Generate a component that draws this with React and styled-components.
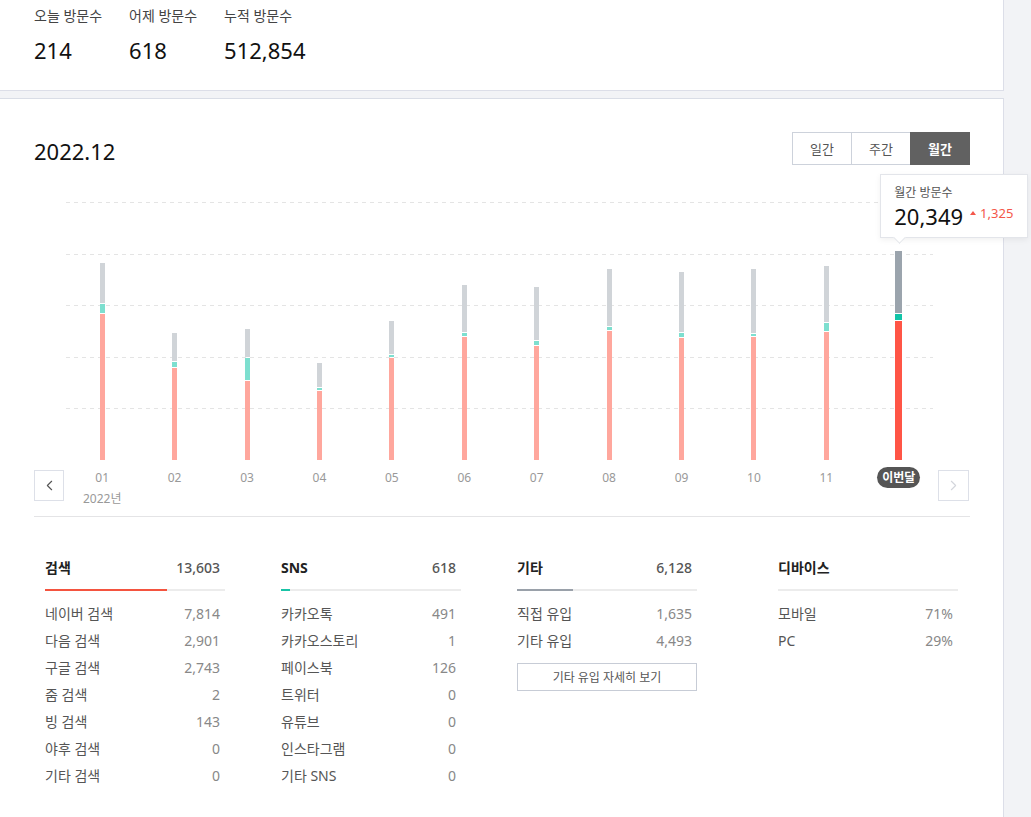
import React from 'react';
import styled, { createGlobalStyle } from 'styled-components';
import { ChevronLeft, ChevronRight } from 'lucide-react';

const FONT = `"Noto Sans", "Noto Sans CJK KR", sans-serif`;

const Global = createGlobalStyle`
  html, body { margin: 0; padding: 0; background: #f2f3f6; }
  body { font-family: ${FONT}; color: #222; }
  * { box-sizing: border-box; }
`;

const Page = styled.div`
  width: 1004px;
  display: flex;
  flex-direction: column;
  gap: 7px;
`;

const Panel = styled.section`
  background: #fff;
  border-right: 1px solid #dcdee8;
  border-bottom: 1px solid #dcdee8;
  border-top: ${(p) => (p.$top ? '1px solid #d9dde6' : 'none')};
`;

const SummaryPanel = styled(Panel)`
  height: 91px;
  padding: 6px 34px 0;
  display: flex;
  gap: 27px;
`;

const SummaryItem = styled.div`
  display: flex;
  flex-direction: column;
`;

const SummaryLabel = styled.div`
  font-size: 14px;
  line-height: 20px;
  color: #444;
`;

const SummaryValue = styled.div`
  margin-top: 9px;
  font-size: 22px;
  line-height: 30px;
  color: #111;
`;

const ChartPanel = styled(Panel)`
  padding: 33px 33px 40px 34px;
`;

const Header = styled.div`
  display: flex;
  justify-content: space-between;
  align-items: flex-start;
  height: 33px;
`;

const Title = styled.h2`
  margin: 3px 0 0;
  font-size: 22px;
  line-height: 33px;
  font-weight: 400;
  color: #111;
`;

const Segments = styled.div`
  display: flex;
`;

const SegButton = styled.button`
  width: 60px;
  height: 33px;
  margin-left: -1px;
  border: 1px solid ${(p) => (p.$active ? '#616161' : '#cdd2db')};
  background: ${(p) => (p.$active ? '#616161' : '#fff')};
  color: ${(p) => (p.$active ? '#fff' : '#555')};
  font-family: ${FONT};
  font-size: 13px;
  font-weight: ${(p) => (p.$active ? 700 : 400)};
  padding: 0;
  cursor: pointer;
`;

const ChartBlock = styled.div`
  height: 352px;
  display: flex;
  align-items: flex-start;
  border-bottom: 1px solid #e4e4e6;
`;

const NavButton = styled.button`
  width: ${(p) => p.$w}px;
  height: 31px;
  margin-top: 305px;
  margin-left: ${(p) => p.$ml}px;
  border: 1px solid #dde0e8;
  background: #fff;
  display: flex;
  align-items: center;
  justify-content: center;
  padding: 0;
  color: ${(p) => (p.$disabled ? '#d4d6dc' : '#555')};
`;

const Plot = styled.div`
  position: relative;
  width: 869px;
  margin-left: 2px;
  height: 351px;
  display: grid;
  grid-template-columns: repeat(12, 1fr);
`;

const GridLines = styled.svg`
  position: absolute;
  left: 0;
  top: 0;
  width: 867px;
  height: 295px;
`;

const Column = styled.div`
  display: flex;
  flex-direction: column;
  align-items: center;
`;

const BarArea = styled.div`
  height: 295px;
  width: 100%;
  display: flex;
  align-items: flex-end;
  justify-content: center;
  position: relative;
`;

const Stack = styled.div`
  position: relative;
  width: ${(p) => (p.$current ? 7 : 5)}px;
  display: flex;
  flex-direction: column;
  gap: 1px;
`;

const Seg = styled.div`
  background: ${(p) => p.$color};
`;

const MonthLabel = styled.div`
  margin-top: 10px;
  font-size: 12px;
  line-height: 16px;
  color: #999;
`;

const YearLabel = styled.div`
  margin-top: 5px;
  font-size: 12px;
  line-height: 16px;
  color: #999;
`;

const CurrentPill = styled.div`
  margin-top: 7px;
  height: 21px;
  padding: 0 5px;
  border-radius: 11px;
  background: #555;
  color: #fff;
  font-size: 12px;
  font-weight: 700;
  line-height: 21px;
`;

const Tooltip = styled.div`
  position: absolute;
  left: -15px;
  bottom: calc(100% + 13px);
  background: #fff;
  border: 1px solid #e3e5ea;
  box-shadow: 0 2px 6px rgba(0, 0, 0, 0.06);
  padding: 10px 14px 7px 13px;
  white-space: nowrap;
  z-index: 2;
`;

const TipArrow = styled.div`
  position: absolute;
  left: 14px;
  bottom: -5px;
  width: 9px;
  height: 9px;
  background: #fff;
  border-right: 1px solid #e3e5ea;
  border-bottom: 1px solid #e3e5ea;
  transform: rotate(45deg);
`;

const TipLabel = styled.div`
  font-size: 12px;
  line-height: 16px;
  color: #555;
`;

const TipRow = styled.div`
  display: flex;
  align-items: center;
  margin-top: 1px;
`;

const TipValue = styled.span`
  font-size: 22px;
  line-height: 28px;
  color: #111;
`;

const Delta = styled.span`
  display: flex;
  align-items: center;
  gap: 4px;
  margin-left: 7px;
  margin-bottom: 7px;
  font-size: 13px;
  line-height: 16px;
  color: #f4574a;
`;

const UpTri = styled.span`
  width: 0;
  height: 0;
  border-left: 3px solid transparent;
  border-right: 3px solid transparent;
  border-bottom: 4px solid #f4574a;
`;

const Stats = styled.div`
  display: flex;
  padding: 41px 0 0 11px;
`;

const StatCol = styled.div`
  width: 180px;
  margin-left: ${(p) => p.$ml}px;
`;

const StatHead = styled.div`
  display: flex;
  justify-content: space-between;
  padding: 0 5px 11px 0;
  line-height: 20px;
`;

const HeadLabel = styled.span`
  font-size: 14px;
  font-weight: 700;
  color: #222;
`;

const HeadValue = styled.span`
  font-size: 14px;
  font-weight: 500;
  color: #555;
`;

const Track = styled.div`
  height: 2px;
  background: #ececec;
  margin-bottom: 9px;
`;

const Fill = styled.div`
  height: 2px;
  background: ${(p) => p.$color};
`;

const Row = styled.div`
  display: flex;
  justify-content: space-between;
  padding-right: 5px;
  line-height: 27px;
`;

const RowLabel = styled.span`
  font-size: 14px;
  color: #555;
`;

const RowValue = styled.span`
  font-size: 14px;
  color: #888;
`;

const DetailButton = styled.button`
  margin-top: 9px;
  width: 180px;
  height: 28px;
  border: 1px solid #c7ccd6;
  background: #fff;
  color: #555;
  font-family: ${FONT};
  font-size: 12px;
  padding: 0;
`;

const bars = [
  [40, 9, 146],
  [28, 5, 92],
  [28, 22, 79],
  [24, 2, 69],
  [33, 2, 102],
  [47, 3, 123],
  [53, 4, 114],
  [57, 3, 129],
  [60, 4, 122],
  [64, 2, 123],
  [56, 8, 128],
  [62, 6, 139],
];

const months = ['01', '02', '03', '04', '05', '06', '07', '08', '09', '10', '11'];

const stats = [
  {
    title: '검색',
    total: '13,603',
    fill: 68,
    color: '#f4543f',
    rows: [
      ['네이버 검색', '7,814'],
      ['다음 검색', '2,901'],
      ['구글 검색', '2,743'],
      ['줌 검색', '2'],
      ['빙 검색', '143'],
      ['야후 검색', '0'],
      ['기타 검색', '0'],
    ],
  },
  {
    title: 'SNS',
    total: '618',
    fill: 5,
    color: '#19c3a6',
    rows: [
      ['카카오톡', '491'],
      ['카카오스토리', '1'],
      ['페이스북', '126'],
      ['트위터', '0'],
      ['유튜브', '0'],
      ['인스타그램', '0'],
      ['기타 SNS', '0'],
    ],
  },
  {
    title: '기타',
    total: '6,128',
    fill: 31,
    color: '#9aa1aa',
    rows: [
      ['직접 유입', '1,635'],
      ['기타 유입', '4,493'],
    ],
    button: '기타 유입 자세히 보기',
  },
  {
    title: '디바이스',
    total: '',
    fill: 0,
    color: '#ececec',
    rows: [
      ['모바일', '71%'],
      ['PC', '29%'],
    ],
  },
];

export default function App() {
  return (
    <>
      <Global />
      <Page>
        <SummaryPanel>
          {[
            ['오늘 방문수', '214'],
            ['어제 방문수', '618'],
            ['누적 방문수', '512,854'],
          ].map(([l, v]) => (
            <SummaryItem key={l}>
              <SummaryLabel>{l}</SummaryLabel>
              <SummaryValue>{v}</SummaryValue>
            </SummaryItem>
          ))}
        </SummaryPanel>

        <ChartPanel $top>
          <Header>
            <Title>2022.12</Title>
            <Segments>
              <SegButton>일간</SegButton>
              <SegButton>주간</SegButton>
              <SegButton $active>월간</SegButton>
            </Segments>
          </Header>

          <ChartBlock>
            <NavButton $w={30} $ml={0}>
              <ChevronLeft size={17} strokeWidth={1.6} />
            </NavButton>
            <Plot>
              <GridLines>
                {[37.5, 89.5, 140.5, 192.5, 243.5].map((y) => (
                  <line key={y} x1="0" x2="867" y1={y} y2={y} stroke="#e4e4e4" strokeWidth="1" strokeDasharray="4 4" />
                ))}
              </GridLines>
              {bars.map(([g, t, r], i) => {
                const current = i === 11;
                return (
                  <Column key={i}>
                    <BarArea>
                      <Stack $current={current}>
                        {current && (
                          <Tooltip>
                            <TipLabel>월간 방문수</TipLabel>
                            <TipRow>
                              <TipValue>20,349</TipValue>
                              <Delta>
                                <UpTri />
                                1,325
                              </Delta>
                            </TipRow>
                            <TipArrow />
                          </Tooltip>
                        )}
                        <Seg $color={current ? '#9ba4ad' : '#d0d4d8'} style={{ height: g }} />
                        <Seg $color={current ? '#12c4a8' : '#7ddfcf'} style={{ height: t }} />
                        <Seg $color={current ? '#ff5546' : '#ffa79d'} style={{ height: r }} />
                      </Stack>
                    </BarArea>
                    {current ? <CurrentPill>이번달</CurrentPill> : <MonthLabel>{months[i]}</MonthLabel>}
                    {i === 0 && <YearLabel>2022년</YearLabel>}
                  </Column>
                );
              })}
            </Plot>
            <NavButton $w={31} $ml={3} $disabled>
              <ChevronRight size={17} strokeWidth={1.6} />
            </NavButton>
          </ChartBlock>

          <Stats>
            {stats.map((s, idx) => (
              <StatCol key={s.title} $ml={idx === 0 ? 0 : idx === 3 ? 81 : 56}>
                <StatHead>
                  <HeadLabel>{s.title}</HeadLabel>
                  <HeadValue>{s.total}</HeadValue>
                </StatHead>
                <Track>
                  <Fill $color={s.color} style={{ width: `${s.fill}%` }} />
                </Track>
                {s.rows.map(([l, v]) => (
                  <Row key={l}>
                    <RowLabel>{l}</RowLabel>
                    <RowValue>{v}</RowValue>
                  </Row>
                ))}
                {s.button && <DetailButton>{s.button}</DetailButton>}
              </StatCol>
            ))}
          </Stats>
        </ChartPanel>
      </Page>
    </>
  );
}
